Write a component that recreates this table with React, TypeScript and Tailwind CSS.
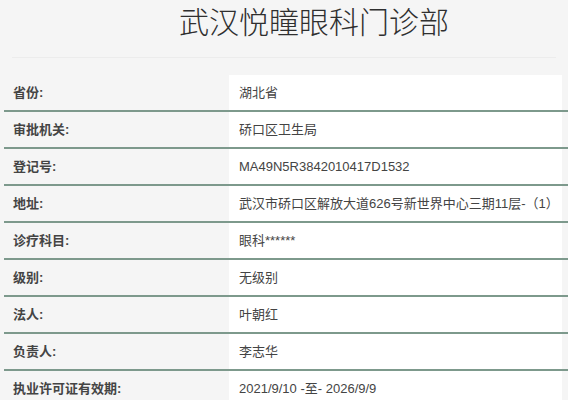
const rows: [string, string][] = [
  ["省份:", "湖北省"],
  ["审批机关:", "硚口区卫生局"],
  ["登记号:", "MA49N5R3842010417D1532"],
  ["地址:", "武汉市硚口区解放大道626号新世界中心三期11层-（1）"],
  ["诊疗科目:", "眼科******"],
  ["级别:", "无级别"],
  ["法人:", "叶朝红"],
  ["负责人:", "李志华"],
  ["执业许可证有效期:", "2021/9/10 -至- 2026/9/9"],
];

export default function App() {
  return (
    <div
      className="w-[568px] h-[400px] overflow-hidden bg-[#f5f5f5] text-[#333]"
      style={{ fontFamily: '"Liberation Sans", "Noto Sans CJK SC", sans-serif' }}
    >
      <div className="mx-[12px] h-[58px] border-b border-[#ececec] pl-[60px] text-center">
        <h1 className="pt-[5px] text-[30px] leading-[36px] font-light text-[#2f2f2f]">武汉悦瞳眼科门诊部</h1>
      </div>
      <div className="mt-[17px]">
        {rows.map(([label, value]) => (
          <div key={label} className="flex h-[37px] border-b-2 border-[#7d998c] ml-[4px]">
            <div className="w-[225px] flex items-center pl-[9px] text-[13px] font-bold text-[#444]">{label}</div>
            <div className="w-[333px] bg-white flex items-center pl-[10px] text-[13px] text-[#444]">{value}</div>
          </div>
        ))}
      </div>
    </div>
  );
}
